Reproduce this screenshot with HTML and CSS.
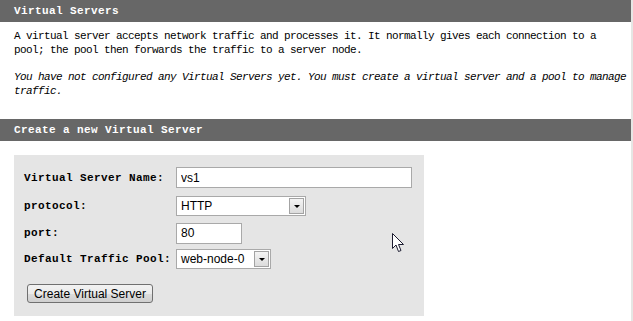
FILE: index.html
```html
<!DOCTYPE html>
<html>
<head>
<meta charset="utf-8">
<title>Virtual Servers</title>
<link rel="stylesheet" href="styles.css">
</head>
<body>
<div class="page">
  <h2 class="bar">Virtual Servers</h2>
  <div class="intro">
    <p>A virtual server accepts network traffic and processes it. It normally gives each connection to a pool; the pool then forwards the traffic to a server node.</p>
    <p class="note">You have not configured any Virtual Servers yet. You must create a virtual server and a pool to manage traffic.</p>
  </div>
  <h2 class="bar bar-create">Create a new Virtual Server</h2>
  <form class="panel">
    <div class="row row-name">
      <label class="label">Virtual Server Name:</label>
      <input class="field field-name" type="text" value="vs1">
    </div>
    <div class="row row-proto">
      <label class="label">protocol:</label>
      <span class="select select-proto"><span class="select-text">HTTP</span><span class="arrow"></span></span>
    </div>
    <div class="row row-port">
      <label class="label">port:</label>
      <input class="field field-port" type="text" value="80">
    </div>
    <div class="row row-pool">
      <label class="label">Default Traffic Pool:</label>
      <span class="select select-pool"><span class="select-text">web-node-0</span><span class="arrow"></span></span>
    </div>
    <button class="btn" type="button">Create Virtual Server</button>
  </form>
</div>
<svg class="cursor" width="13" height="20" viewBox="0 0 13 20">
  <path d="M0.5 0.5 L0.5 15.5 L4 12 L6.5 18.5 L9 17.5 L6.5 11.5 L11.5 11.5 Z" fill="#fff" stroke="#1c1c30" stroke-width="1" stroke-linejoin="miter"/>
</svg>
</body>
</html>
```

FILE: styles.css
```css
html, body {
  margin: 0;
  padding: 0;
  background: #fff;
}
body {
  width: 633px;
  min-height: 321px;
  position: relative;
  font-family: "Liberation Mono", "DejaVu Sans Mono", monospace;
}
.page {
  width: 631px;
  min-height: 321px;
  border-right: 2px solid #e6e6e4;
}
.bar {
  margin: 0;
  height: 22px;
  line-height: 22px;
  padding-left: 14px;
  background: #676767;
  color: #fff;
  font-size: 11px;
  font-weight: bold;
  letter-spacing: 0.4px;
}
.intro {
  padding: 7px 4px 0 14px;
}
.intro p {
  margin: 0;
  font-size: 11px;
  letter-spacing: -0.6px;
  line-height: 14px;
  color: #000;
}
.intro .note {
  margin-top: 13px;
  font-style: italic;
}
.bar-create {
  margin-top: 21px;
}
.panel {
  margin: 14px 0 0 14px;
  width: 410px;
  height: 161px;
  box-sizing: border-box;
  padding: 8px 0 0 10px;
  background: #e5e5e5;
}
.row {
  display: flex;
  align-items: center;
}
.row-name { height: 29px; }
.row-proto { height: 28px; }
.row-port { height: 26px; }
.row-pool { height: 26px; }
.label {
  width: 152px;
  flex: none;
  font-size: 11px;
  font-weight: bold;
  letter-spacing: 0.4px;
  color: #000;
}
.field {
  box-sizing: border-box;
  height: 21px;
  margin: 0;
  padding: 0 0 0 4px;
  border: 1px solid #a9a9a9;
  background: #fff;
  font-family: "Liberation Sans", Arial, sans-serif;
  font-size: 12px;
  color: #000;
  outline: none;
}
.field-name { width: 236px; }
.field-port { width: 66px; }
.select {
  box-sizing: border-box;
  position: relative;
  display: flex;
  align-items: center;
  height: 20px;
  border: 1px solid #a9a9a9;
  background: #fff;
  font-family: "Liberation Sans", Arial, sans-serif;
  font-size: 12px;
  color: #000;
}
.select-text {
  padding-left: 4px;
}
.select-proto { width: 130px; }
.select-pool { width: 95px; }
.arrow {
  position: absolute;
  right: 1px;
  top: 1px;
  bottom: 1px;
  width: 15px;
  box-sizing: border-box;
  border: 1px solid #a3a3a3;
  background: linear-gradient(#f4f4f4, #dcdcdc);
}
.arrow::after {
  content: "";
  position: absolute;
  left: 4px;
  top: 6px;
  border-left: 3px solid transparent;
  border-right: 3px solid transparent;
  border-top: 3px solid #000;
}
.btn {
  margin: 12px 0 0 3px;
  height: 19px;
  width: 126px;
  padding: 0;
  border: 1px solid #707070;
  border-radius: 3px;
  background: linear-gradient(#f2f2f2 0%, #ebebeb 50%, #dddddd 51%, #cfcfcf 100%);
  font-family: "Liberation Sans", Arial, sans-serif;
  font-size: 12px;
  color: #000;
}
.cursor {
  position: absolute;
  left: 392px;
  top: 233px;
}
```
